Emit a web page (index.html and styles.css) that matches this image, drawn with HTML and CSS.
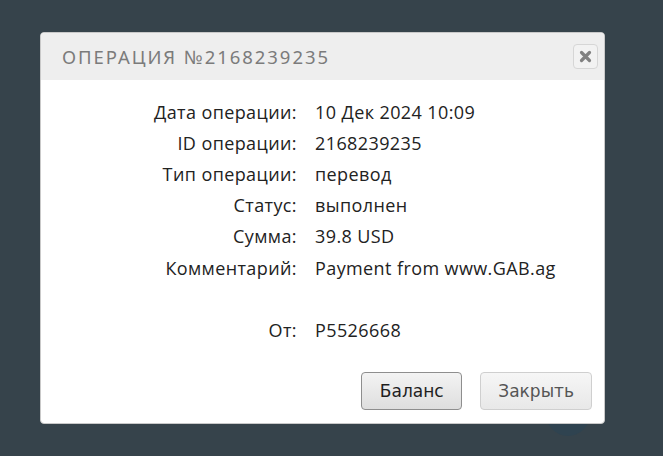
FILE: index.html
```html
<!DOCTYPE html>
<html lang="ru">
<head>
    <meta charset="UTF-8">
    <meta name="viewport" content="width=device-width, initial-scale=1.0">
    <title>Операция</title>
    <link rel="stylesheet" href="styles.css">
</head>
<body>

<div class="bg-circle"></div>

<div class="modal">
    <div class="modal-header">
        <h2>ОПЕРАЦИЯ №2168239235</h2>
        <button class="close-btn" title="Закрыть">
            <svg width="13" height="13" viewBox="0 0 13 13"><path d="M2.5 2.5 L10.5 10.5 M10.5 2.5 L2.5 10.5" stroke="#808080" stroke-width="3.2" stroke-linecap="round"/></svg>
        </button>
    </div>

    <div class="modal-body">
        <div class="info">
            <div class="label">Дата операции:</div><div class="value">10 Дек 2024 10:09</div>
            <div class="label">ID операции:</div><div class="value">2168239235</div>
            <div class="label">Тип операции:</div><div class="value">перевод</div>
            <div class="label">Статус:</div><div class="value">выполнен</div>
            <div class="label">Сумма:</div><div class="value">39.8 USD</div>
            <div class="label">Комментарий:</div><div class="value">Payment from www.GAB.ag</div>
            <div class="label"></div><div class="value"></div>
            <div class="label">От:</div><div class="value">P5526668</div>
        </div>

        <div class="actions">
            <button class="btn btn-main">Баланс</button>
            <button class="btn">Закрыть</button>
        </div>
    </div>
</div>

</body>
</html>
```

FILE: styles.css
```css
body {
    margin: 0;
    height: 456px;
    background: #36434b;
    font-family: "Open Sans", Arial, sans-serif;
    padding: 32px 0 0 40px;
    box-sizing: border-box;
    overflow: hidden;
    position: relative;
}
.bg-circle {
    position: absolute;
    left: 546px;
    top: 392px;
    width: 44px;
    height: 44px;
    border-radius: 50%;
    background: #2f4350;
}
.modal {
    position: relative;
    width: 565px;
    height: 392px;
    background: #fff;
    border: 1px solid #c9c9c9;
    border-radius: 4px;
    box-sizing: border-box;
    overflow: hidden;
}
.modal-header {
    height: 47px;
    background: #eeeeee;
    display: flex;
    align-items: center;
    justify-content: space-between;
    padding: 0 6px 0 21px;
}
.modal-header h2 {
    margin: 0;
    font-family: "Noto Sans", sans-serif;
    font-weight: normal;
    font-size: 18.5px;
    letter-spacing: 1.95px;
    color: #7b7b7b;
}
.close-btn {
    width: 25px;
    height: 25px;
    padding: 0;
    display: flex;
    align-items: center;
    justify-content: center;
    background: #f2f2f2;
    border: 1px solid #d6d6d6;
    border-radius: 4px;
}
.modal-body {
    padding: 16px 0 0 0;
}
.info {
    display: grid;
    grid-template-columns: 256px 1fr;
    column-gap: 18px;
    grid-auto-rows: 31.2px;
    align-items: center;
    font-size: 18px;
    letter-spacing: 0.4px;
    color: #222;
}
.label {
    text-align: right;
}
.actions {
    display: flex;
    justify-content: flex-end;
    gap: 18px;
    padding: 26px 12px 0 0;
}
.btn {
    height: 38px;
    padding: 0 17px;
    font-family: "DejaVu Sans", sans-serif;
    font-size: 17px;
    color: #555;
    background: linear-gradient(#f6f6f6, #e8e8e8);
    border: 1px solid #cfcfcf;
    border-radius: 4px;
}
.btn-main {
    width: 101px;
    color: #1e1e1e;
    background: linear-gradient(#f3f3f3, #dedede);
    border-color: #8e8e8e;
}
```
